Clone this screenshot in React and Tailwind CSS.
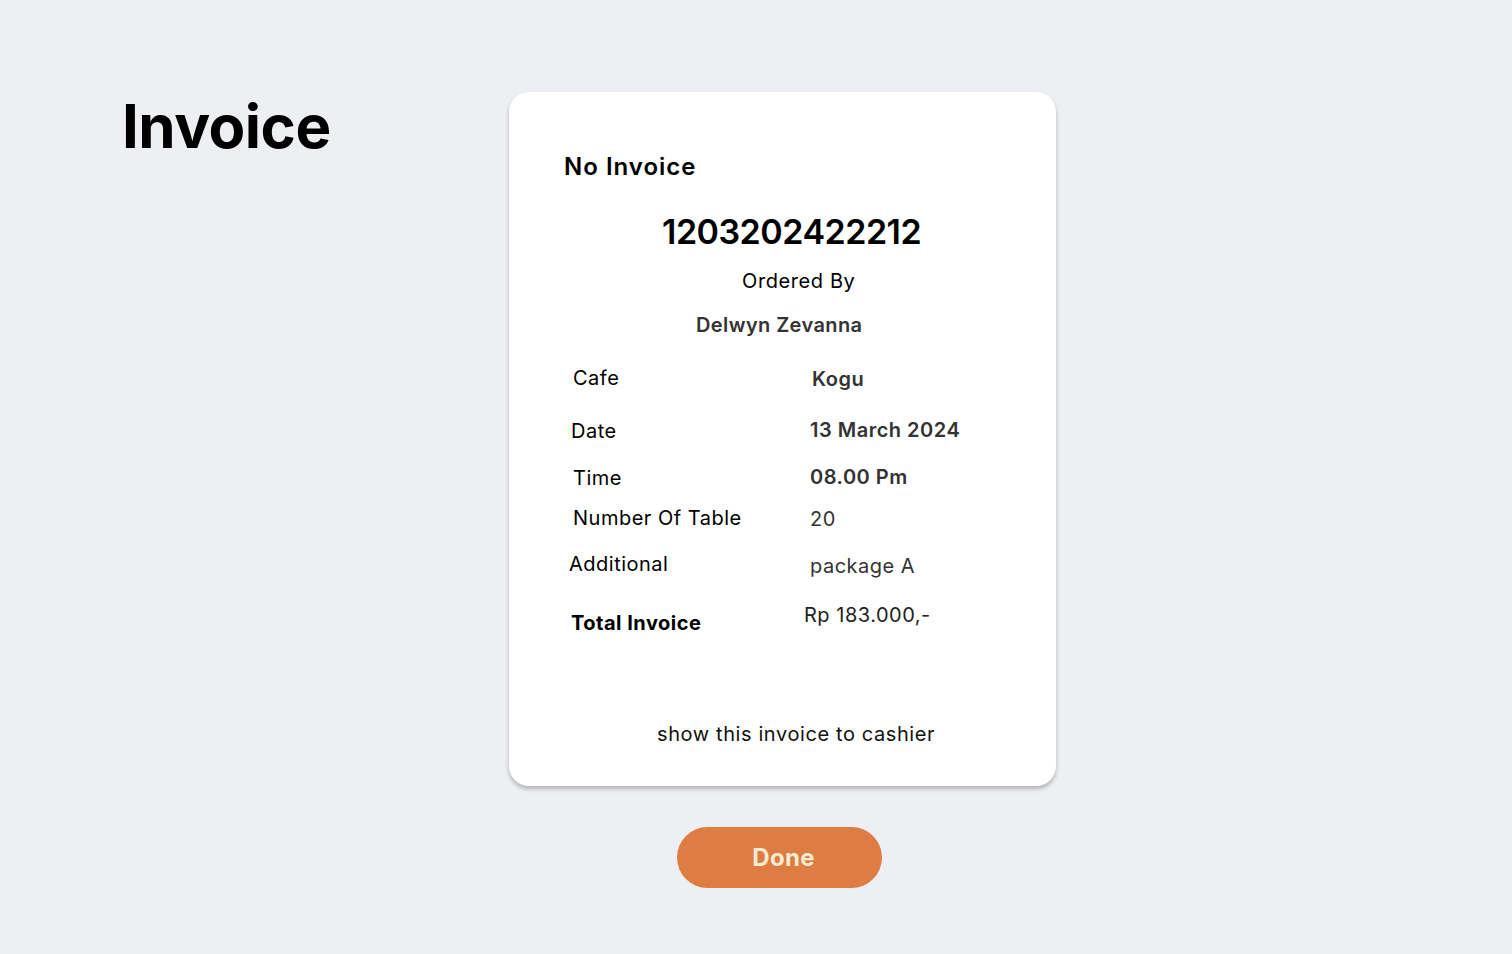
import React from "react";

const ROWS = [
  { label: "Cafe", value: "Kogu", rowTop: "mt-[25px]", labelX: "pl-[64px]", valueX: "ml-[303px]", labelY: "mt-0", valueY: "mt-[1px]", valueStyle: "font-semibold text-[#333333]" },
  { label: "Date", value: "13 March 2024", rowTop: "mt-[24px]", labelX: "pl-[62px]", valueX: "ml-[301px]", labelY: "mt-[1px]", valueY: "mt-0", valueStyle: "font-semibold text-[#333333]" },
  { label: "Time", value: "08.00 Pm", rowTop: "mt-[18px]", labelX: "pl-[64px]", valueX: "ml-[301px]", labelY: "mt-[1px]", valueY: "mt-0", valueStyle: "font-semibold text-[#333333]" },
  { label: "Number Of Table", value: "20", rowTop: "mt-[12px]", labelX: "pl-[64px]", valueX: "ml-[301px]", labelY: "mt-0", valueY: "mt-[1px]", valueStyle: "font-normal text-[#333333]" },
  { label: "Additional", value: "package A", rowTop: "mt-[18px]", labelX: "pl-[60px]", valueX: "ml-[301px]", labelY: "mt-0", valueY: "mt-[2px]", valueStyle: "font-normal text-[#333333]" },
];

const App = () => {
  return (
    <div className="min-h-[954px] w-full bg-[#eeeff3] font-['Inter',sans-serif] text-black">
      <div className="flex">
        <div className="pl-[122px] pt-[92px] w-[509px] shrink-0">
          <h1 className="text-[60px] font-bold leading-[68px] tracking-[-0.5px]">Invoice</h1>
        </div>
        <div className="flex flex-col items-center pt-[92px]">
          <div className="w-[547px] h-[694px] rounded-[20px] bg-white shadow-[0_3px_4px_rgba(0,0,0,0.25)] flex flex-col">
            <p className="pl-[55px] mt-[59px] text-[24px] font-semibold leading-[32px] tracking-[1px]">No Invoice</p>
            <p className="ml-[153px] mt-[28px] text-[34px] font-semibold leading-[42px] tracking-[-0.5px]">1203202422212</p>
            <p className="ml-[233px] mt-[14px] text-[20px] leading-[28px] tracking-[0.6px]">Ordered By</p>
            <p className="ml-[187px] mt-[16px] text-[20px] font-semibold leading-[28px] tracking-[0.4px] text-[#333333]">Delwyn Zevanna</p>
            {ROWS.map((r) => (
              <div key={r.label} className={`relative flex items-start text-[20px] leading-[28px] tracking-[0.5px] ${r.rowTop}`}>
                <span className={`${r.labelX} ${r.labelY}`}>{r.label}</span>
                <span className={`absolute left-0 top-0 ${r.valueX} ${r.valueY} ${r.valueStyle}`}>{r.value}</span>
              </div>
            ))}
            <div className="relative flex items-start text-[20px] leading-[28px] tracking-[0.5px] mt-[8px]">
              <span className="pl-[62px] mt-[23px] font-bold">Total Invoice</span>
              <span className="absolute left-0 top-0 ml-[295px] mt-[15px] text-[#222222]">Rp 183.000,-</span>
            </div>
            <p className="mt-[83px] ml-[148px] text-[20px] leading-[28px] tracking-[0.6px] text-[#111111]">show this invoice to cashier</p>
          </div>
          <button className="mt-[41px] -ml-[6px] w-[205px] h-[61px] pl-[8px] rounded-full bg-[#dd7d43] text-[#f6ebd2] text-[24px] font-bold tracking-[0.3px]">
            Done
          </button>
        </div>
      </div>
    </div>
  );
};

export default App;
